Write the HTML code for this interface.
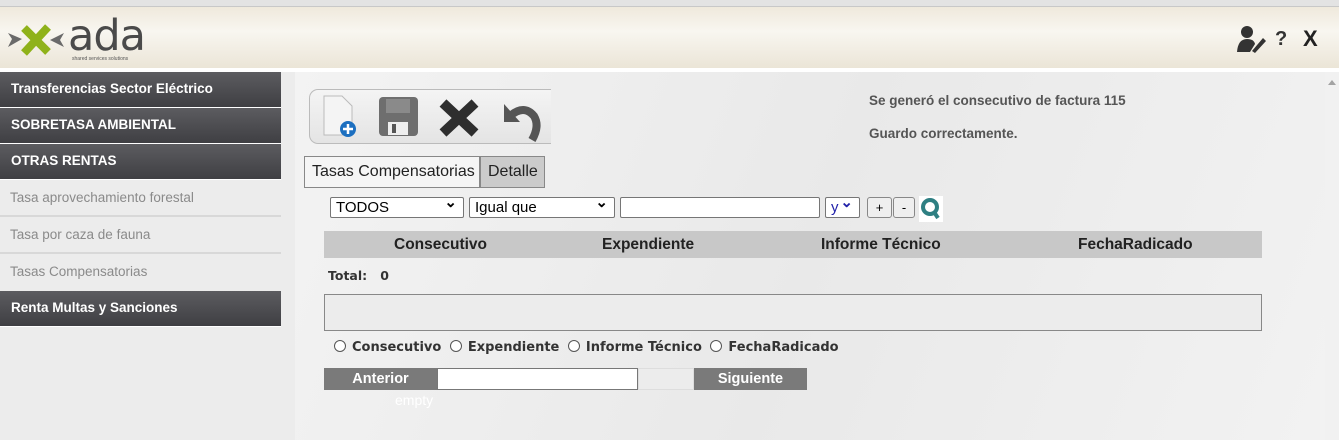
<!DOCTYPE html>
<html><head><meta charset="utf-8"><style>
*{box-sizing:border-box;margin:0;padding:0}
body{width:1339px;height:440px;overflow:hidden;background:#ececec;font-family:"Liberation Sans",sans-serif;position:relative}
.top{position:absolute;left:0;top:0;width:1339px;height:7px;background:#e3e3e3;border-bottom:1px solid #c8c8c8}
.hdr{position:absolute;left:0;top:7px;width:1339px;height:61px;background:linear-gradient(#efe9dc,#f8f6f0 40%,#ebe5d7)}
.white{position:absolute;left:0;top:68px;width:1339px;height:4px;background:#fff}
.side{position:absolute;left:0;top:72px;width:281px;height:368px;background:#ececec}
.mi{height:36px;background:linear-gradient(#5c5c60,#3f3f43);color:#fff;font-weight:bold;font-size:13.5px;padding-left:11px;line-height:34px;border-bottom:1px solid #fff}
.si{height:37px;color:#8a8a8a;font-size:13.5px;padding-left:10px;line-height:36px;border-bottom:2px solid #d8d8d8}
.main{position:absolute;left:295px;top:72px;width:1030px;height:368px;background:linear-gradient(110deg,#f3f3f3,#e9e9e9 50%,#f2f2f2)}
.scroll{position:absolute;left:1325px;top:72px;width:14px;height:368px;background:#f1f1f1}
.abs{position:absolute}
.sel{position:absolute;height:21px;border:1px solid #767676;border-radius:2px;background:#fff;font-size:15px;padding-left:5px;line-height:19px}
.sel:after{content:"⌄";position:absolute;right:6px;top:-5px;font-size:15px;font-weight:bold}
.rad{font-family:"DejaVu Sans",sans-serif;font-weight:bold;font-size:13px;color:#333}
.rc{display:inline-block;width:12px;height:12px;border:1px solid #555;border-radius:50%;vertical-align:-1px;margin:0 6px 0 0;background:#fff}
</style></head><body>
<div class="top"></div>
<div class="hdr">
 <svg class="abs" style="left:6px;top:14px" width="60" height="40" viewBox="0 0 60 40">
  <path d="M2 12 L16 18 L2 26 L6 18 Z" fill="#6a6a6a"/><path d="M18 7 L42 31" stroke="#8fb21a" stroke-width="8"/><path d="M42 6 L18 32" stroke="#8fb21a" stroke-width="8"/><path d="M58 12 L44 19 L58 26 L54 19 Z" fill="#6a6a6a"/>
 </svg>
 <div class="abs" style="left:68px;top:4px;font-size:43px;color:#4a4a4a;letter-spacing:-1px;font-family:'DejaVu Sans',sans-serif">ada</div>
 <div class="abs" style="left:72px;top:49px;font-size:5px;color:#555">shared services solutions</div>
 <svg class="abs" style="left:1236px;top:17px" width="32" height="30" viewBox="0 0 32 30"><circle cx="11" cy="8" r="6" fill="#333"/><path d="M1 28 Q2 15 11 15 Q18 15 19 20 L14 28 Z" fill="#333"/><path d="M16 27 L27 14 L30 17 L19 29 Z" fill="#333"/></svg>
 <div class="abs" style="left:1275px;top:21px;font-size:20px;font-weight:bold;color:#333">?</div>
 <div class="abs" style="left:1303px;top:19px;font-size:22px;font-weight:bold;color:#222">X</div>
</div>
<div class="white"></div>
<div class="side">
 <div class="mi">Transferencias Sector Eléctrico</div>
 <div class="mi">SOBRETASA AMBIENTAL</div>
 <div class="mi">OTRAS RENTAS</div>
 <div class="si">Tasa aprovechamiento forestal</div>
 <div class="si">Tasa por caza de fauna</div>
 <div class="si" style="border:none;height:37px">Tasas Compensatorias</div>
 <div class="mi">Renta Multas y Sanciones</div>
</div>
<div class="main"></div>
<div class="scroll"><div style="margin:8px 0 0 3px;width:0;height:0;border-left:4px solid transparent;border-right:4px solid transparent;border-bottom:5px solid #a3a3a3"></div></div>

<div class="abs" style="left:309px;top:89px;width:242px;height:55px;border:1px solid #bbb;border-right:none;border-radius:9px 0 0 9px;background:linear-gradient(#f4f4f4,#e4e4e4)"></div>
<svg class="abs" style="left:322px;top:95px" width="40" height="44"><path d="M2 1 H20 L30 11 V40 H2 Z" fill="#f4f4f4" stroke="#bbb"/><circle cx="26" cy="34" r="8" fill="#1c6fc0"/><path d="M26 29 V39 M21 34 H31" stroke="#fff" stroke-width="2.5"/></svg>
<svg class="abs" style="left:378px;top:96px" width="42" height="42"><rect x="1" y="1" width="39" height="39" rx="4" fill="#6e6e6e"/><rect x="8" y="3" width="24" height="14" fill="#8a8a8a"/><rect x="10" y="26" width="20" height="13" fill="#eee"/><rect x="14" y="28" width="4" height="9" fill="#555"/></svg>
<svg class="abs" style="left:438px;top:98px" width="42" height="40"><path d="M5 5 L37 35 M37 5 L5 35" stroke="#2e2e2e" stroke-width="10"/></svg>
<svg class="abs" style="left:498px;top:96px" width="44" height="46"><path d="M6 8 L6 26 L22 26 Z" fill="#555"/><path d="M12 20 Q26 8 36 20 Q42 30 34 44" stroke="#555" stroke-width="8" fill="none"/></svg>

<div class="abs" style="left:869px;top:93px;font-size:13.5px;font-weight:bold;color:#555">Se generó el consecutivo de factura 115</div>
<div class="abs" style="left:869px;top:126px;font-size:13.5px;font-weight:bold;color:#555">Guardo correctamente.</div>

<div class="abs" style="left:304px;top:156px;width:176px;height:32px;border:1px solid #888;background:#f5f5f5;font-size:16px;line-height:30px;padding-left:7px;color:#222">Tasas Compensatorias</div>
<div class="abs" style="left:480px;top:156px;width:65px;height:32px;border:1px solid #888;background:#cbcbcb;font-size:16px;line-height:30px;padding-left:7px;color:#222">Detalle</div>

<div class="sel" style="left:330px;top:197px;width:134px">TODOS</div>
<div class="sel" style="left:469px;top:197px;width:146px">Igual que</div>
<div class="abs" style="left:620px;top:197px;width:200px;height:21px;border:1px solid #767676;background:#fff;border-radius:2px"></div>
<div class="sel" style="left:825px;top:197px;width:35px;color:#22a;">y</div>
<div class="abs" style="left:867px;top:197px;width:25px;height:21px;border:1px solid #888;border-radius:3px;background:#efefef;text-align:center;font-size:13px;line-height:19px">+</div>
<div class="abs" style="left:893px;top:197px;width:22px;height:21px;border:1px solid #888;border-radius:3px;background:#efefef;text-align:center;font-size:13px;line-height:19px">-</div>
<svg class="abs" style="left:919px;top:196px" width="24" height="26"><rect width="24" height="26" fill="#fff"/><circle cx="11" cy="11" r="7" fill="none" stroke="#2e7f82" stroke-width="4"/><path d="M15 16 L19 22" stroke="#2e7f82" stroke-width="4"/></svg>

<div class="abs" style="left:324px;top:231px;width:938px;height:27px;background:#c8c8c8;font-size:15.5px;font-weight:bold;color:#222;line-height:27px">
 <span class="abs" style="left:70px">Consecutivo</span><span class="abs" style="left:278px">Expendiente</span><span class="abs" style="left:497px">Informe Técnico</span><span class="abs" style="left:754px">FechaRadicado</span>
</div>
<div class="abs rad" style="left:328px;top:268px;font-size:12.5px">Total:&nbsp;&nbsp;&nbsp;0</div>
<div class="abs" style="left:324px;top:294px;width:938px;height:37px;border:1px solid #888;background:#ececec"></div>
<div class="abs rad" style="left:334px;top:340px;white-space:nowrap"><span class="rc"></span>Consecutivo <span class="rc" style="margin-left:4px"></span>Expendiente <span class="rc" style="margin-left:4px"></span>Informe Técnico <span class="rc" style="margin-left:4px"></span>FechaRadicado</div>
<div class="abs" style="left:324px;top:368px;width:113px;height:22px;background:#7a7a7a;color:#fff;font-weight:bold;font-size:14.5px;text-align:center;line-height:22px">Anterior</div>
<div class="abs" style="left:437px;top:368px;width:201px;height:22px;border:1px solid #777;background:#fff"></div>
<div class="abs" style="left:638px;top:368px;width:56px;height:22px;background:#ececec;border:1px solid #ddd"></div>
<div class="abs" style="left:694px;top:368px;width:113px;height:22px;background:#7a7a7a;color:#fff;font-weight:bold;font-size:14.5px;text-align:center;line-height:22px">Siguiente</div>
<div class="abs" style="left:395px;top:392px;color:#fff;font-size:14px">empty</div>
</body></html>
